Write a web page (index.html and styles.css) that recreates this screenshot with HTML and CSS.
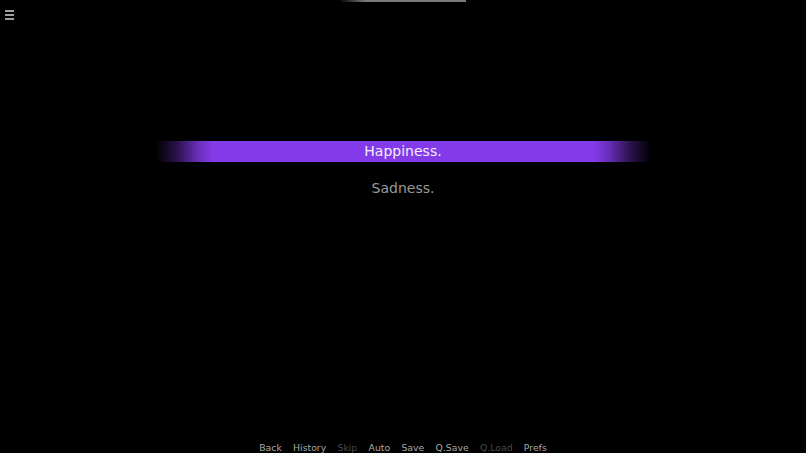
FILE: index.html
```html
<!DOCTYPE html>
<html lang="en">
<head>
<meta charset="utf-8">
<title>Choice</title>
<link rel="stylesheet" href="styles.css">
</head>
<body>
<div class="screen">
  <div class="notch"></div>
  <div class="menu-btn" aria-label="Menu">
    <span class="line"></span>
    <span class="line"></span>
    <span class="line"></span>
  </div>
  <div class="choices">
    <div class="choice selected">Happiness.</div>
    <div class="choice">Sadness.</div>
  </div>
  <nav class="quick-menu">
    <span class="qm">Back</span>
    <span class="qm">History</span>
    <span class="qm disabled">Skip</span>
    <span class="qm">Auto</span>
    <span class="qm">Save</span>
    <span class="qm">Q.Save</span>
    <span class="qm disabled">Q.Load</span>
    <span class="qm">Prefs</span>
  </nav>
</div>
</body>
</html>
```

FILE: styles.css
```css
html, body {
  margin: 0;
  padding: 0;
  background: #000;
}
body {
  font-family: "DejaVu Sans", "Liberation Sans", sans-serif;
  width: 806px;
  height: 453px;
  overflow: hidden;
}
.screen {
  height: 453px;
  display: flex;
  flex-direction: column;
}
.notch {
  flex: none;
  width: 126px;
  height: 1.5px;
  margin: 0 auto;
  background: linear-gradient(to right, #050505 0, #3a3a3a 12px, #7a7a7a 26px, #7a7a7a 100%);
}
.menu-btn {
  flex: none;
  width: 9px;
  margin: 8.5px 0 0 5px;
  display: flex;
  flex-direction: column;
  gap: 2.5px;
}
.menu-btn .line {
  display: block;
  height: 1.5px;
  background: #a0a0a0;
}
.choices {
  flex: none;
  margin-top: 121px;
  display: flex;
  flex-direction: column;
  align-items: center;
  gap: 16px;
}
.choice {
  width: 495px;
  height: 21px;
  line-height: 21px;
  text-align: center;
  font-size: 14px;
  color: #9a9a9a;
}
.choice.selected {
  color: #f2eefa;
  background: linear-gradient(to right,
    rgba(131, 58, 232, 0) 0,
    rgba(131, 58, 232, 0.35) 22px,
    rgba(131, 58, 232, 0.8) 42px,
    #833ae8 57px,
    #833ae8 438px,
    rgba(131, 58, 232, 0.8) 453px,
    rgba(131, 58, 232, 0.35) 473px,
    rgba(131, 58, 232, 0) 100%);
}
.quick-menu {
  margin-top: auto;
  display: flex;
  justify-content: center;
  gap: 11.3px;
  font-size: 9.3px;
  line-height: 12px;
  height: 12px;
  transform: translateY(1px);
}
.qm {
  color: #a8a8a8;
}
.qm.disabled {
  color: #4a4a4a;
}
```
